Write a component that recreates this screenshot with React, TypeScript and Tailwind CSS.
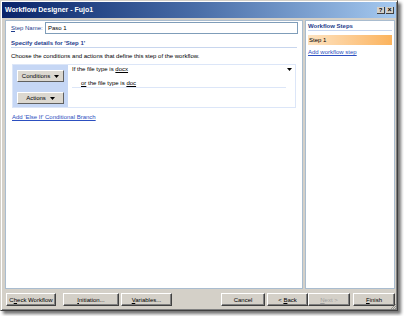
const font = "font-['Liberation_Sans',Arial,sans-serif]";

const WinButton = ({ label, ul, w, disabled }: { label: string; ul?: number; w: string; disabled?: boolean }) => {
  const i = ul ?? -1;
  return (
    <div
      className={`${w} h-[13px] flex items-center justify-center bg-[#d4d0c8] border border-t-white border-l-white border-r-[#404040] border-b-[#404040] shadow-[inset_-1px_-1px_0_#808080] ${
        disabled ? "text-[#a0a0a0]" : "text-black"
      }`}
    >
      {i >= 0 ? (
        <span>
          {label.slice(0, i)}
          <span className="underline">{label[i]}</span>
          {label.slice(i + 1)}
        </span>
      ) : (
        label
      )}
    </div>
  );
};

const Caret = ({ cls = "ml-[4px]" }: { cls?: string }) => (
  <svg width="5" height="3" viewBox="0 0 5 3" className={cls}>
    <path d="M0 0h5L2.5 3z" fill="#000" />
  </svg>
);

export default function App() {
  return (
    <div className={`w-[404px] h-[316px] bg-white overflow-hidden text-[6px] leading-[8px] ${font}`}>
      <div className="w-[398px] h-[311px] bg-[#d4d0c8] border border-t-[#d4d0c8] border-l-[#d4d0c8] border-r-[#404040] border-b-[#404040] shadow-[inset_1px_1px_0_#fff,inset_-1px_-1px_0_#808080,3px_3px_3px_rgba(0,0,0,0.55)] p-[1px] flex flex-col">
        {/* title bar */}
        <div className="h-[16px] shrink-0 bg-gradient-to-r from-[#0a246a] via-[#4a6ea8] to-[#a6caf0] flex items-center pl-[3px] pr-[2px]">
          <span className="text-white font-bold text-[7px] leading-[10px]">Workflow Designer - Fujo1</span>
          <div className="ml-auto flex gap-[1px]">
            <div className="w-[8px] h-[7px] bg-[#d4d0c8] border-r border-b border-[#404040] flex items-center justify-center text-[6px] font-bold leading-none">?</div>
            <div className="w-[8px] h-[7px] bg-[#d4d0c8] border-r border-b border-[#404040] flex items-center justify-center text-[7px] font-bold leading-none">×</div>
          </div>
        </div>

        {/* body */}
        <div className="flex gap-[2px] pl-[3px] pt-[2px]">
          {/* main panel */}
          <div className="w-[298px] h-[269px] bg-white border border-[#a9bccf] px-[5px]">
            <div className="flex items-center h-[12px] mt-[1px]">
              <span className="text-[#1e3c8c] w-[34px]">
                <span className="underline">S</span>tep Name:
              </span>
              <div className="flex-1 h-[12px] border border-[#7f9db9] flex items-center pl-[2px] text-black mr-[-1px]">
                Paso 1
              </div>
            </div>
            <div className="mt-[5px] h-[9px] border-b border-[#c8d6ee]">
              <span className="font-bold text-[#1e3c8c]">Specify details for 'Step 1'</span>
            </div>
            <div className="text-black mt-[4px] h-[8px]">
              Choose the conditions and actions that define this step of the workflow.
            </div>
            <div className="mt-[4px] mx-[1px] h-[44px] flex border border-[#dce6f8]">
              <div className="w-[55px] bg-[#c6d7f5] flex flex-col items-center pt-[5px] gap-[10px]">
                <div className="w-[47px] h-[12px] bg-[#dcd8d0] border border-t-white border-l-white border-r-[#606060] border-b-[#606060] flex items-center justify-center">
                  Conditions
                  <Caret />
                </div>
                <div className="w-[47px] h-[12px] bg-[#dcd8d0] border border-t-white border-l-white border-r-[#606060] border-b-[#606060] flex items-center justify-center">
                  Actions
                  <Caret />
                </div>
              </div>
              <div className="flex-1 pl-[4px] pr-[3px] text-black">
                <div className="flex items-start h-[8px]">
                  <div>
                    If the file type is <span className="underline">docx</span>
                  </div>
                  <Caret cls="ml-auto mt-[3px]" />
                </div>
                <div className="pl-[9px] mt-[6px] h-[9px] border-b border-[#dce6f8] mr-[6px]">
                  <span className="underline">or</span> the file type is <span className="underline">doc</span>
                </div>
              </div>
            </div>
            <div className="mt-[5px] pl-[1px] text-[#2c4fc0] underline">Add 'Else If' Conditional Branch</div>
          </div>

          {/* right panel */}
          <div className="w-[90px] h-[269px] bg-white border border-[#a9bccf] px-[2px]">
            <div className="mt-[1px] h-[9px] border-b border-[#c8d6ee]">
              <span className="font-bold text-[#1e3c8c]">Workflow Steps</span>
            </div>
            <div className="mt-[4px] h-[10px] bg-gradient-to-r from-[#fde3c0] to-[#fbb35c] flex items-center pl-[1px] text-black">
              Step 1
            </div>
            <div className="mt-[3px] text-[#2c4fc0] underline">Add workflow step</div>
          </div>
        </div>

        {/* footer */}
        <div className="flex items-center pl-[4px] mt-[4px] relative">
          <WinButton label="Check Workflow" ul={1} w="w-[50px]" />
          <div className="ml-[7px]">
            <WinButton label="Initiation..." ul={0} w="w-[56px]" />
          </div>
          <div className="ml-[2px]">
            <WinButton label="Variables..." ul={0} w="w-[51px]" />
          </div>
          <div className="ml-[49px]">
            <WinButton label="Cancel" w="w-[44px]" />
          </div>
          <div className="ml-[2px]">
            <WinButton label="< Back" ul={2} w="w-[41px]" />
          </div>
          <WinButton label="Next >" ul={0} w="w-[42px]" disabled />
          <div className="ml-[3px]">
            <WinButton label="Finish" ul={0} w="w-[42px]" />
          </div>
          <svg width="6" height="6" viewBox="0 0 6 6" className="absolute right-[0px] top-[11px]">
            <path d="M6 0L0 6M6 2L2 6M6 4L4 6" stroke="#808080" strokeWidth="0.8" />
          </svg>
        </div>
      </div>
    </div>
  );
}
